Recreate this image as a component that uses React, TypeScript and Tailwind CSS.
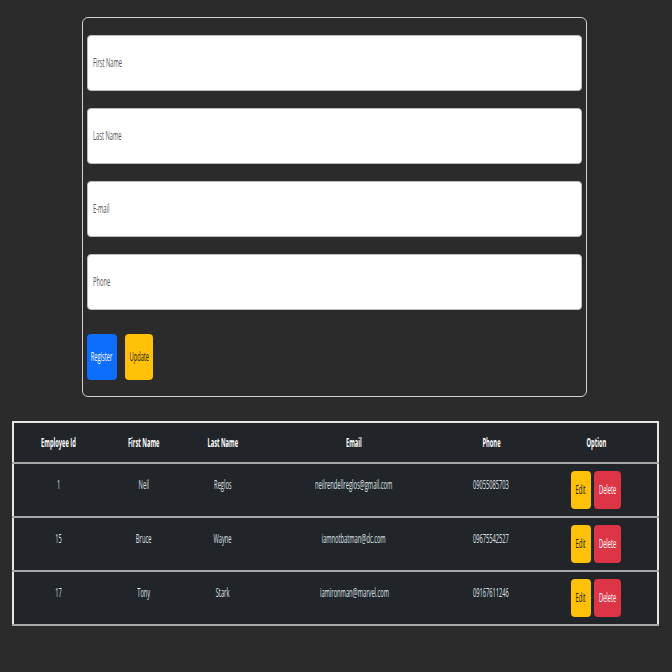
const fields = ["First Name", "Last Name", "E-mail", "Phone"];

const employees = [
  { id: 1, first: "Neil", last: "Reglos", email: "neilrendellreglos@gmail.com", phone: "09055085703" },
  { id: 15, first: "Bruce", last: "Wayne", email: "iamnotbatman@dc.com", phone: "09675542527" },
  { id: 17, first: "Tony", last: "Stark", email: "iamironman@marvel.com", phone: "09167611246" },
];

const columns = [
  { label: "Employee Id", w: "w-[90px]" },
  { label: "First Name", w: "w-[82px]" },
  { label: "Last Name", w: "w-[76px]" },
  { label: "Email", w: "w-[186px]" },
  { label: "Phone", w: "w-[88px]" },
  { label: "Option", w: "w-[123px]" },
];

// the shot is squeezed sideways, so every label is narrowed
const Squeeze = ({ children, left }: { children: React.ReactNode; left?: boolean }) => (
  <span
    className={`inline-block whitespace-nowrap scale-x-[0.44] ${left ? "origin-left" : "origin-center"}`}
  >
    {children}
  </span>
);

export default function App() {
  return (
    <div
      className="min-h-screen bg-[#2b2b2b] pt-[17px] pb-8 text-[13px]"
      style={{ fontFamily: '"Open Sans", "Noto Sans", sans-serif' }}
    >
      <div className="ml-[82px] w-[505px] rounded-md border border-[#d0d0d0] px-[4px] pt-[17px] pb-[16px]">
        <div className="flex flex-col gap-[17px]">
          {fields.map((f) => (
            <div
              key={f}
              className="flex h-[56px] items-center rounded border border-[#bdbdbd] bg-white pl-[5px] text-[#555]"
            >
              <Squeeze left>{f}</Squeeze>
            </div>
          ))}
        </div>

        <div className="mt-[24px] flex gap-[8px]">
          <button className="flex h-[46px] w-[30px] items-center justify-center rounded bg-[#0d6efd] text-white">
            <Squeeze>Register</Squeeze>
          </button>
          <button className="flex h-[46px] w-[28px] items-center justify-center rounded bg-[#ffc107] text-[#222]">
            <Squeeze>Update</Squeeze>
          </button>
        </div>
      </div>

      <table className="ml-[12px] mt-[24px] w-[645px] table-fixed border-collapse border-2 border-[#e6e6e6] bg-[#212529]">
        <thead>
          <tr className="h-[41px] border-b-2 border-[#a8a8a8]">
            {columns.map((c) => (
              <th key={c.label} className={`${c.w} p-0 text-center font-bold text-white`}>
                <Squeeze>{c.label}</Squeeze>
              </th>
            ))}
          </tr>
        </thead>
        <tbody className="text-[#dee2e6]">
          {employees.map((e) => (
            <tr key={e.id} className="h-[54px] border-b-2 border-[#a8a8a8]">
              <td className="pb-[10px] text-center">
                <Squeeze>{e.id}</Squeeze>
              </td>
              <td className="pb-[10px] text-center">
                <Squeeze>{e.first}</Squeeze>
              </td>
              <td className="pb-[10px] text-center">
                <Squeeze>{e.last}</Squeeze>
              </td>
              <td className="pb-[10px] text-center">
                <Squeeze>{e.email}</Squeeze>
              </td>
              <td className="pb-[10px] text-center">
                <Squeeze>{e.phone}</Squeeze>
              </td>
              <td className="text-center">
                <div className="flex justify-center gap-[3px]">
                  <button className="flex h-[38px] w-[20px] items-center justify-center rounded bg-[#ffc107] text-[#222]">
                    <Squeeze>Edit</Squeeze>
                  </button>
                  <button className="flex h-[38px] w-[27px] items-center justify-center rounded bg-[#dc3545] text-white">
                    <Squeeze>Delete</Squeeze>
                  </button>
                </div>
              </td>
            </tr>
          ))}
        </tbody>
      </table>
    </div>
  );
}
